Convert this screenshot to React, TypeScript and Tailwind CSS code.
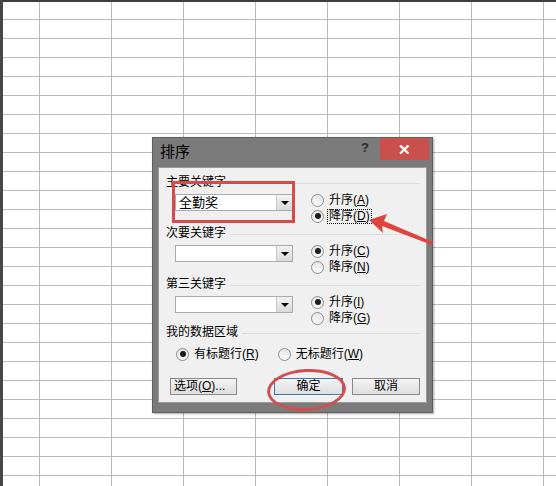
import React from 'react';

const Key = ({ k }: { k: string }) => (
  <>
    (<span className="underline">{k}</span>)
  </>
);

const Radio = ({
  checked,
  text,
  k,
  focus,
}: {
  checked?: boolean;
  text: string;
  k: string;
  focus?: boolean;
}) => (
  <div className="flex items-center h-4">
    <span className="w-[13px] h-[13px] rounded-full border border-[#8c8c8c] bg-gradient-to-b from-[#e6e6e6] to-[#fbfbfb] flex items-center justify-center shrink-0">
      {checked && <span className="w-[6px] h-[6px] rounded-full bg-[#1c1c1c]" />}
    </span>
    <span
      className={`ml-[3px] px-[1px] leading-[13px] border ${
        focus ? 'border-dotted border-black' : 'border-transparent'
      }`}
    >
      {text}
      <Key k={k} />
    </span>
  </div>
);

const Combo = ({ value }: { value?: string }) => (
  <div className="w-[118px] h-[17px] border border-[#a9abb0] bg-white flex">
    <div className="flex-1 pl-[3px] text-[13px] leading-[15px] text-black">{value}</div>
    <div className="w-[16px] border-l border-[#c8c8c8] bg-gradient-to-b from-[#f3f3f3] to-[#d9d9d9] flex items-center justify-center">
      <span className="w-0 h-0 border-l-[4px] border-r-[4px] border-t-[4px] border-l-transparent border-r-transparent border-t-black" />
    </div>
  </div>
);

const Header = ({ label }: { label: string }) => (
  <div className="flex items-center h-4">
    <span className="leading-4">{label}</span>
    <span className="flex-1 h-px bg-[#dcdcdc] ml-[4px] mt-[2px]" />
  </div>
);

const KeySection = ({
  label,
  value,
  first,
  second,
  className,
}: {
  label: string;
  value?: string;
  first: { text: string; k: string; checked?: boolean; focus?: boolean };
  second: { text: string; k: string; checked?: boolean; focus?: boolean };
  className?: string;
}) => (
  <div className={className}>
    <Header label={label} />
    <div className="flex mt-[2px]">
      <div className="ml-[9px] mt-[2px]">
        <Combo value={value} />
      </div>
      <div className="ml-[18px] flex flex-col">
        <Radio {...first} />
        <Radio {...second} />
      </div>
    </div>
  </div>
);

const Button = ({ children, primary, className }: { children: React.ReactNode; primary?: boolean; className?: string }) => (
  <div
    className={`h-[17px] flex items-center justify-center border bg-gradient-to-b from-[#f4f4f4] to-[#dedede] leading-[15px] ${
      primary ? 'border-[#3d7bad]' : 'border-[#8a8a8a]'
    } ${className ?? ''}`}
  >
    {children}
  </div>
);

export default function App() {
  return (
    <div className="relative w-[556px] h-[486px] overflow-hidden bg-white font-['Liberation_Sans','Noto_Sans_CJK_SC',sans-serif] text-[12px] text-black">
      {/* sheet grid */}
      <div className="absolute inset-0 bg-[linear-gradient(to_right,#bcb8c0_1px,transparent_1px),linear-gradient(to_bottom,#bcb8c0_1px,transparent_1px)] bg-[size:72px_19px] bg-[position:39px_0px]" />
      <div className="absolute left-0 top-0 w-full h-[2px] bg-[#3d3d3d]" />
      <div className="absolute left-0 top-0 w-[3px] h-full bg-[#474747]" />

      {/* dialog */}
      <div className="absolute left-[152px] top-[137px] w-[281px] h-[276px] bg-[#7b7b7b] border border-[#5f5f5f] shadow-[1px_1px_2px_rgba(0,0,0,0.35)] flex flex-col">
        <div className="h-[29px] flex items-start shrink-0">
          <span className="ml-[7px] mt-[6px] text-[15px] leading-[16px] text-black">排序</span>
          <span className="ml-auto mt-[3px] mr-[11px] text-[13px] font-bold text-[#2a2a2a] leading-[14px]">?</span>
          <div className="w-[49px] h-[22px] mr-[3px] bg-[#c9504c] flex items-center justify-center text-white text-[15px] font-bold leading-none">
            ✕
          </div>
        </div>
        <div className="mx-[5px] mb-[9px] flex-1 bg-[#f0f0f0] border border-[#9a9a9a] pl-[7px] pr-[6px] pt-[6px]">
          <KeySection
            label="主要关键字"
            value="全勤奖"
            first={{ text: '升序', k: 'A' }}
            second={{ text: '降序', k: 'D', checked: true, focus: true }}
          />
          <KeySection
            className="mt-[1px]"
            label="次要关键字"
            first={{ text: '升序', k: 'C', checked: true }}
            second={{ text: '降序', k: 'N' }}
          />
          <KeySection
            className="mt-[1px]"
            label="第三关键字"
            first={{ text: '升序', k: 'I', checked: true }}
            second={{ text: '降序', k: 'G' }}
          />
          <div className="mt-[-2px]">
            <Header label="我的数据区域" />
            <div className="flex mt-[6px]">
              <div className="ml-[10px]">
                <Radio checked text="有标题行" k="R" />
              </div>
              <div className="ml-[17px]">
                <Radio text="无标题行" k="W" />
              </div>
            </div>
          </div>
          <div className="flex mt-[16px]">
            <Button className="ml-[4px] w-[67px] justify-start pl-[3px]">
              选项<Key k="O" />...
            </Button>
            <Button primary className="ml-[37px] w-[69px]">
              确定
            </Button>
            <Button className="ml-[9px] w-[68px]">取消</Button>
          </div>
        </div>
      </div>

      {/* annotations */}
      <div className="absolute left-[172px] top-[181px] w-[123px] h-[42px] border-[3px] border-[#d74a4a]" />
      <div className="absolute left-[267px] top-[369px] w-[79px] h-[42px] rounded-[50%] border-[3px] border-[#d05050] rotate-[-3deg]" />
      <svg className="absolute left-0 top-0" width="556" height="486" viewBox="0 0 556 486">
        <polygon
          points="369,220 387,214 384,221 433,242 432,245 382,226 383,233"
          fill="#e0433d"
        />
      </svg>
    </div>
  );
}
